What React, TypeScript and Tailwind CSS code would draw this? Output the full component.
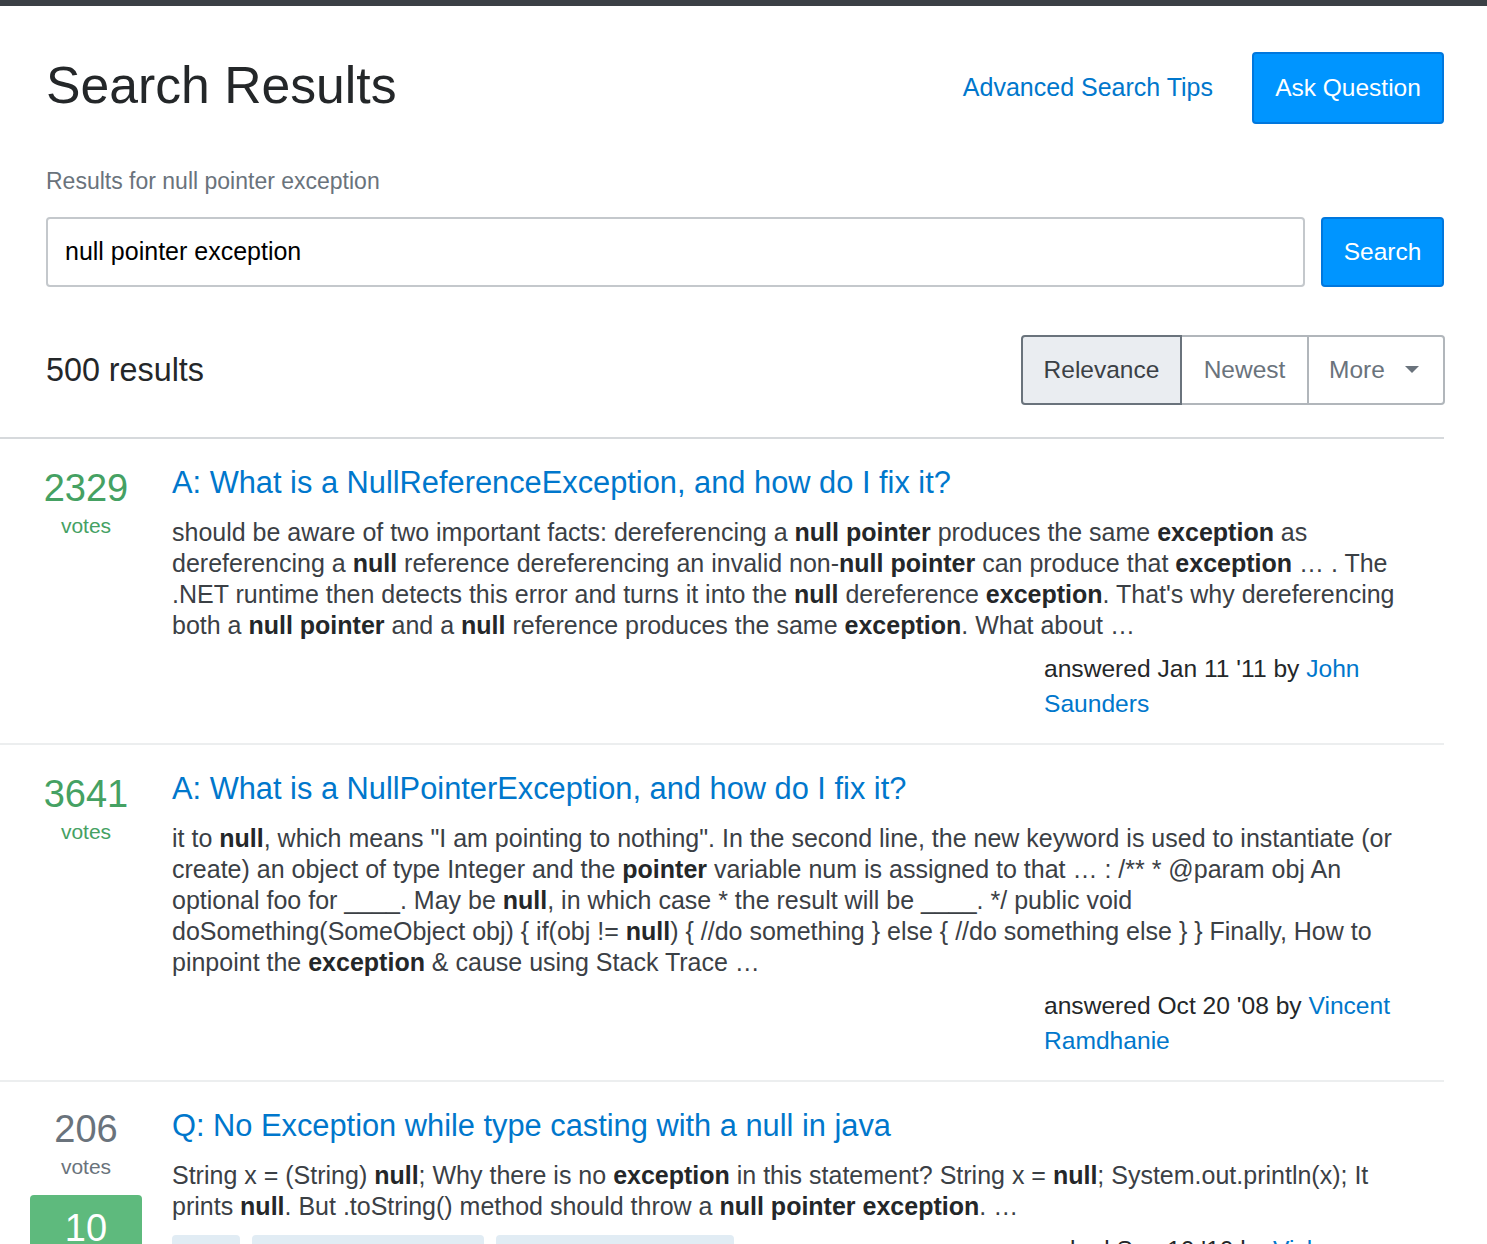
import { ReactNode } from "react";

type Result = {
    votes: number;
    accepted: boolean;
    answers?: number;
    title: string;
    excerpt: ReactNode;
    verb: string;
    date: string;
    author: string;
    tags?: { name: string; width: string }[];
};

const B = ({ children }: { children: ReactNode }) => (
    <b className="font-bold text-[#242729]">{children}</b>
);

const results: Result[] = [
    {
        votes: 2329,
        accepted: true,
        title: "A: What is a NullReferenceException, and how do I fix it?",
        excerpt: (
            <>
                should be aware of two important facts: dereferencing a <B>null pointer</B> produces the same{" "}
                <B>exception</B> as dereferencing a <B>null</B> reference dereferencing an invalid non-<B>null pointer</B>{" "}
                can produce that <B>exception</B> … . The .NET runtime then detects this error and turns it into the{" "}
                <B>null</B> dereference <B>exception</B>. That's why dereferencing both a <B>null pointer</B> and a{" "}
                <B>null</B> reference produces the same <B>exception</B>. What about …
            </>
        ),
        verb: "answered",
        date: "Jan 11 '11",
        author: "John Saunders",
    },
    {
        votes: 3641,
        accepted: true,
        title: "A: What is a NullPointerException, and how do I fix it?",
        excerpt: (
            <>
                it to <B>null</B>, which means "I am pointing to nothing". In the second line, the new keyword is used to
                instantiate (or create) an object of type Integer and the <B>pointer</B> variable num is assigned to that
                … : /** * @param obj An optional foo for ____. May be <B>null</B>, in which case * the result will be
                ____. */ public void doSomething(SomeObject obj) {"{"} if(obj != <B>null</B>) {"{"} //do something {"}"}{" "}
                else {"{"} //do something else {"}"} {"}"} Finally, How to pinpoint the <B>exception</B> &amp; cause
                using Stack Trace …
            </>
        ),
        verb: "answered",
        date: "Oct 20 '08",
        author: "Vincent Ramdhanie",
    },
    {
        votes: 206,
        accepted: false,
        answers: 10,
        title: "Q: No Exception while type casting with a null in java",
        excerpt: (
            <>
                String x = (String) <B>null</B>; Why there is no <B>exception</B> in this statement? String x ={" "}
                <B>null</B>; System.out.println(x); It prints <B>null</B>. But .toString() method should throw a{" "}
                <B>null pointer exception</B>. …
            </>
        ),
        verb: "asked",
        date: "Sep 10 '10",
        author: "Vicky",
        tags: [
            { name: "java", width: "w-[68px]" },
            { name: "nullpointerexception", width: "w-[232px]" },
            { name: "type-conversion", width: "w-[238px]" },
        ],
    },
];

function Signature({ r }: { r: Result }) {
    return (
        <div className="ml-auto w-[356px] shrink-0 text-[24.6px] leading-[35px] text-[#242729]">
            {r.verb} {r.date} by <a className="text-[#0077cc]">{r.author}</a>
        </div>
    );
}

function ResultRow({ r }: { r: Result }) {
    const tone = r.accepted ? "text-[#45a163]" : "text-[#6a737c] -mt-[2px]";
    return (
        <div className="flex border-b-2 border-[#eceeef] pt-[26px] pb-[22px]">
            <div className="w-[172px] shrink-0 flex flex-col items-center">
                <div className={"text-[38px] leading-[46px] " + tone}>{r.votes}</div>
                <div
                    className={
                        "text-[21px] leading-[30px] " + (r.accepted ? "text-[#45a163]" : "text-[#6a737c]")
                    }
                >
                    votes
                </div>
                {r.answers !== undefined && (
                    <div className="mt-[13px] w-[112px] rounded-[4px] bg-[#5eba7d] text-white flex flex-col items-center pt-[10px] pb-[8px]">
                        <span className="text-[38px] leading-[46px]">{r.answers}</span>
                        <span className="text-[21px] leading-[30px]">answers</span>
                    </div>
                )}
            </div>
            <div className="flex-1 min-w-0 pr-[44px]">
                <a className="block text-[30.8px] leading-[37px] -mt-[1px] text-[#0077cc]">{r.title}</a>
                <p className="mt-[16px] text-[25px] leading-[31px] text-[#3b4045]">{r.excerpt}</p>
                {r.tags ? (
                    <div className="mt-[10px] flex items-start">
                        <div className="mt-[3px] flex gap-[12px]">
                            {r.tags.map((t) => (
                                <span
                                    key={t.name}
                                    className={
                                        t.width +
                                        " h-[44px] rounded-[4px] bg-[#e1ecf4] text-[#39739d] text-[20px] flex items-center justify-center"
                                    }
                                >
                                    {t.name}
                                </span>
                            ))}
                        </div>
                        <Signature r={r} />
                    </div>
                ) : (
                    <div className="mt-[10px]">
                        <Signature r={r} />
                    </div>
                )}
            </div>
        </div>
    );
}

export default function App() {
    return (
        <div className="min-h-screen bg-white font-['Liberation_Sans',Arial,sans-serif]">
            <div className="h-[6px] bg-[#3b4045]" />
            <div className="w-[1444px]">
                <div className="pl-[46px] pt-[46px]">
                    <div className="flex items-center justify-between">
                        <h1 className="text-[51.7px] leading-[60px] text-[#242729] -mt-[6px]">Search Results</h1>
                        <div className="flex items-center gap-[39px]">
                            <a className="text-[25px] text-[#0077cc]">Advanced Search Tips</a>
                            <button className="h-[72px] w-[192px] rounded-[4px] border-2 border-[#0077dd] bg-[#0095ff] text-[24.5px] text-white">
                                Ask Question
                            </button>
                        </div>
                    </div>

                    <div className="mt-[42px] text-[23px] leading-[30px] text-[#6a737c]">
                        Results for null pointer exception
                    </div>

                    <div className="mt-[21px] flex gap-[16px]">
                        <div className="flex-1 h-[70px] rounded-[4px] border-2 border-[#c4c8cc] flex items-center px-[17px] text-[25px] text-black">
                            null pointer exception
                        </div>
                        <button className="h-[70px] w-[123px] rounded-[4px] border-2 border-[#0077dd] bg-[#0095ff] text-[24.5px] text-white">
                            Search
                        </button>
                    </div>

                    <div className="mt-[48px] mb-[32px] flex items-center justify-between">
                        <div className="text-[32.3px] text-[#242729]">500 results</div>
                        <div className="flex h-[70px] -mr-[1px] text-[24.5px]">
                            <div className="w-[161px] flex items-center justify-center rounded-l-[4px] border-2 border-[#6a737c] bg-[#eaedf1] text-[#3b4045]">
                                Relevance
                            </div>
                            <div className="w-[125px] flex items-center justify-center border-y-2 border-[#b1b6bb] text-[#6a737c]">
                                Newest
                            </div>
                            <div className="w-[138px] flex items-center gap-[20px] pl-[20px] rounded-r-[4px] border-2 border-[#b1b6bb] text-[#6a737c]">
                                More
                                <svg width="14" height="8" viewBox="0 0 14 8">
                                    <path d="M0 0 L14 0 L7 7 Z" fill="#6a737c" />
                                </svg>
                            </div>
                        </div>
                    </div>
                </div>

                <div className="border-t-2 border-[#d6d9dc]">
                    {results.map((r) => (
                        <ResultRow key={r.title} r={r} />
                    ))}
                </div>
            </div>
        </div>
    );
}
